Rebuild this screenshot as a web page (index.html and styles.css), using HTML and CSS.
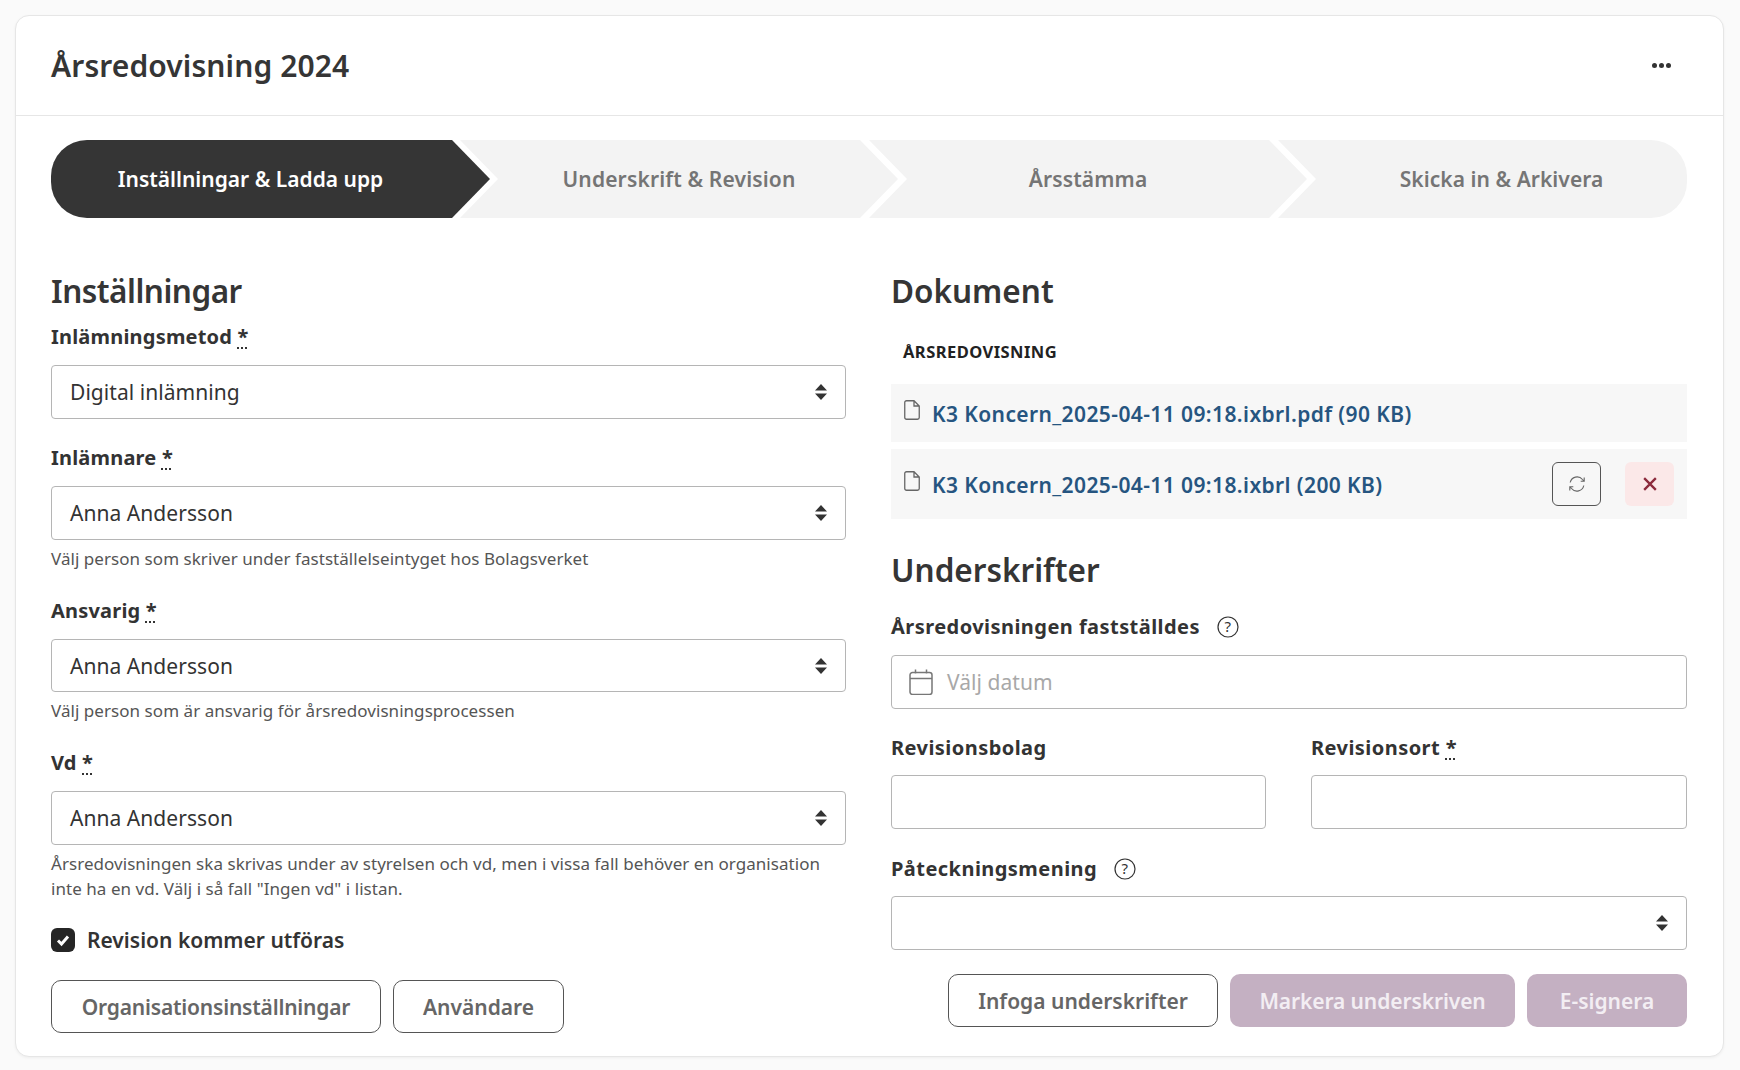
FILE: index.html
```html
<!DOCTYPE html>
<html lang="sv">
<head>
<meta charset="utf-8">
<title>Årsredovisning 2024</title>
<link rel="stylesheet" href="styles.css">
</head>
<body>
<main class="card">
  <header class="card-head">
    <h1 class="title">Årsredovisning 2024</h1>
    <button class="more" aria-label="Mer"><span></span><span></span><span></span></button>
  </header>
  <div class="card-body">
    <nav class="steps">
      <div class="step step-first">Inställningar &amp; Ladda upp</div>
      <div class="step step-mid">Underskrift &amp; Revision</div>
      <div class="step step-mid">Årsstämma</div>
      <div class="step step-last">Skicka in &amp; Arkivera</div>
    </nav>
    <div class="columns">
      <section class="col col-left">
        <h2 class="heading heading-left">Inställningar</h2>
        <label class="label label-first">Inlämningsmetod <abbr class="req">*</abbr></label>
        <div class="control select">Digital inlämning<svg class="updown" viewBox="0 0 12 16"><path d="M6 0l6 6.5H0zM6 16l6-6.5H0z"/></svg></div>
        <label class="label label-next">Inlämnare <abbr class="req">*</abbr></label>
        <div class="control select">Anna Andersson<svg class="updown" viewBox="0 0 12 16"><path d="M6 0l6 6.5H0zM6 16l6-6.5H0z"/></svg></div>
        <p class="help">Välj person som skriver under fastställelseintyget hos Bolagsverket</p>
        <label class="label label-help">Ansvarig <abbr class="req">*</abbr></label>
        <div class="control select control-short">Anna Andersson<svg class="updown" viewBox="0 0 12 16"><path d="M6 0l6 6.5H0zM6 16l6-6.5H0z"/></svg></div>
        <p class="help">Välj person som är ansvarig för årsredovisningsprocessen</p>
        <label class="label label-vd">Vd <abbr class="req">*</abbr></label>
        <div class="control select">Anna Andersson<svg class="updown" viewBox="0 0 12 16"><path d="M6 0l6 6.5H0zM6 16l6-6.5H0z"/></svg></div>
        <p class="help">Årsredovisningen ska skrivas under av styrelsen och vd, men i vissa fall behöver en organisation inte ha en vd. Välj i så fall "Ingen vd" i listan.</p>
        <div class="check-row">
          <span class="checkbox"><svg viewBox="0 0 24 24"><path d="M7 12.5l3.5 3.5L17 8.500" fill="none" stroke="#fff" stroke-width="3"/></svg></span>
          <span class="check-label">Revision kommer utföras</span>
        </div>
        <div class="actions actions-left">
          <button class="btn btn-outline btn-org">Organisationsinställningar</button>
          <button class="btn btn-outline btn-users">Användare</button>
        </div>
      </section>
      <section class="col col-right">
        <h2 class="heading heading-right">Dokument</h2>
        <div class="doc-group">ÅRSREDOVISNING</div>
        <div class="doc-row doc-row-a">
          <svg class="file" viewBox="0 0 16 20"><path d="M2.500.75h7.500l5.250 5.250v11.500a1.750 1.750 0 0 1-1.750 1.750h-11a1.750 1.750 0 0 1-1.750-1.750v-15a1.750 1.750 0 0 1 1.750-1.750zM10 .75v5.250h5.250" fill="none" stroke="#666" stroke-width="1.300"/></svg>
          <a class="doc-link">K3 Koncern_2025-04-11 09:18.ixbrl.pdf (90 KB)</a>
        </div>
        <div class="doc-row doc-row-b">
          <svg class="file" viewBox="0 0 16 20"><path d="M2.500.75h7.500l5.250 5.250v11.500a1.750 1.750 0 0 1-1.750 1.750h-11a1.750 1.750 0 0 1-1.750-1.750v-15a1.750 1.750 0 0 1 1.750-1.750zM10 .75v5.250h5.250" fill="none" stroke="#666" stroke-width="1.300"/></svg>
          <a class="doc-link">K3 Koncern_2025-04-11 09:18.ixbrl (200 KB)</a>
          <button class="icon-btn icon-refresh" aria-label="Uppdatera"><svg viewBox="0 0 18 18" width="18" height="18"><path d="M2.200 7.500A7 7 0 0 1 14.500 4.500L16 6.200M15.800 10.500A7 7 0 0 1 3.500 13.500L2 11.800M16.200 2.500V6.200H12.700M1.800 15.500V11.800H5.300" fill="none" stroke="#666" stroke-width="1.100"/></svg></button>
          <button class="icon-btn icon-delete" aria-label="Ta bort"><svg viewBox="0 0 12 12" width="14" height="14"><path d="M1 1l10 10M11 1L1 11" fill="none" stroke="#8c2a3c" stroke-width="2"/></svg></button>
        </div>
        <h2 class="heading heading-sign">Underskrifter</h2>
        <label class="label label-date">Årsredovisningen fastställdes <svg class="q" viewBox="0 0 22 22"><circle cx="11" cy="11" r="10" fill="none" stroke="#333" stroke-width="1.200"/><text x="11" y="16" text-anchor="middle" class="q-mark">?</text></svg></label>
        <div class="control date">
          <svg class="cal" viewBox="0 0 24 26"><path d="M3.500 3.500h17a2.500 2.500 0 0 1 2.500 2.500v17a2.500 2.500 0 0 1-2.500 2.500h-17a2.500 2.500 0 0 1-2.500-2.500v-17a2.500 2.500 0 0 1 2.500-2.500zM1 9.500h22M6.500 .5v4M17.500 .5v4" fill="none" stroke="#777" stroke-width="1.500"/></svg>
          <span class="placeholder">Välj datum</span>
        </div>
        <div class="pair">
          <div class="pair-item">
            <label class="label">Revisionsbolag</label>
            <div class="control"></div>
          </div>
          <div class="pair-item">
            <label class="label">Revisionsort <abbr class="req">*</abbr></label>
            <div class="control"></div>
          </div>
        </div>
        <label class="label label-pat">Påteckningsmening <svg class="q" viewBox="0 0 22 22"><circle cx="11" cy="11" r="10" fill="none" stroke="#333" stroke-width="1.200"/><text x="11" y="16" text-anchor="middle" class="q-mark">?</text></svg></label>
        <div class="control select"><span></span><svg class="updown" viewBox="0 0 12 16"><path d="M6 0l6 6.5H0zM6 16l6-6.5H0z"/></svg></div>
        <div class="actions actions-right">
          <button class="btn btn-outline btn-insert">Infoga underskrifter</button>
          <button class="btn btn-muted btn-mark">Markera underskriven</button>
          <button class="btn btn-muted btn-sign">E-signera</button>
        </div>
      </section>
    </div>
  </div>
</main>
</body>
</html>
```
FILE: styles.css
```css
* { box-sizing: border-box; }
html, body { margin: 0; height: 100%; }
body {
  background: #fafafa;
  color: #333;
  font-family: "Noto Sans", "Liberation Sans", sans-serif;
  padding: 15px 16px 13px 15px;
}
.card {
  height: 1042px;
  background: #fff;
  border: 1px solid #e6e6e6;
  border-radius: 14px;
  box-shadow: 0 1px 3px rgba(0, 0, 0, .05);
}
.card-head {
  height: 100px;
  padding: 0 35px;
  display: flex;
  align-items: center;
  justify-content: space-between;
  border-bottom: 1px solid #e6e6e6;
}
.title { margin: 0; font-size: 30px; font-weight: 600; letter-spacing: .1px; color: #353535; }
.more {
  display: flex;
  gap: 2px;
  padding: 0;
  margin-right: 17px;
  border: 0;
  background: none;
}
.more span { width: 5px; height: 5px; border-radius: 50%; background: #333; }
.card-body { padding: 24px 35px 0; }
.steps { display: flex; height: 78px; }
.step {
  height: 78px;
  display: flex;
  align-items: center;
  justify-content: center;
  font-size: 21px;
  font-weight: 600;
  background: #f3f3f3;
  color: #757575;
}
.step-first {
  width: 439px;
  margin-right: -30px;
  padding-right: 40px;
  color: #fff;
  background: #353535;
  border-radius: 36px 0 0 36px;
  clip-path: polygon(0 0, 401px 0, 439px 50%, 401px 100%, 0 100%);
}
.step-mid {
  width: 438px;
  margin-right: -29px;
  letter-spacing: .15px;
  clip-path: polygon(0 0, 400px 0, 438px 50%, 400px 100%, 0 100%, 38px 50%);
}
.step-last {
  width: 409px;
  padding-left: 38px;
  letter-spacing: .05px;
  border-radius: 0 36px 36px 0;
  clip-path: polygon(0 0, 100% 0, 100% 100%, 0 100%, 38px 50%);
}
.columns {
  display: grid;
  grid-template-columns: 795px 796px;
  column-gap: 45px;
  margin-top: 49px;
}
.heading { margin: 0; font-size: 31.500px; line-height: 48px; font-weight: 600; color: #353535; }
.heading-left { letter-spacing: -.5px; }
.label {
  display: block;
  font-size: 20px;
  line-height: 28px;
  font-weight: 700;
  letter-spacing: .2px;
  color: #333;
}
.col-right .label { letter-spacing: .45px; }
.label-first { margin-top: 8px; margin-bottom: 14px; }
.label-next { margin-top: 25px; margin-bottom: 14px; }
.label-help { margin-top: 26px; margin-bottom: 14px; }
.label-vd { margin-top: 26px; margin-bottom: 14px; }
.req {
  text-decoration: underline dotted;
  text-underline-offset: 3px;
  font-weight: 700;
}
.control {
  height: 54px;
  border: 1px solid #b5b5b5;
  border-radius: 4px;
  background: #fff;
  padding: 0 18px;
  display: flex;
  align-items: center;
  font-size: 21px;
  letter-spacing: .05px;
  color: #333;
}
.control-short { height: 53px; }
.select { justify-content: space-between; }
.updown { width: 12px; height: 16px; fill: #333; margin-right: 0; }
.help {
  margin: 6px 0 0;
  font-size: 17px;
  line-height: 25px;
  letter-spacing: .05px;
  color: #555;
}
.check-row { display: flex; align-items: center; gap: 12px; margin-top: 25px; }
.checkbox {
  width: 24px;
  height: 24px;
  border-radius: 6px;
  background: #262626;
  display: block;
}
.checkbox svg { display: block; width: 24px; height: 24px; }
.check-label { font-size: 21px; font-weight: 600; color: #333; }
.actions { display: flex; gap: 12px; }
.actions-left { margin-top: 26px; }
.actions-right { justify-content: flex-end; margin-top: 24px; }
.btn {
  height: 53px;
  border-radius: 10px;
  font: 600 21px "Noto Sans", "Liberation Sans", sans-serif;
  padding: 0;
}
.btn-outline { background: #fff; border: 1px solid #555; color: #666; }
.btn-muted { background: #c4b0c2; border: 0; color: #f3eef3; }
.btn-org { width: 330px; letter-spacing: -.2px; }
.btn-users { width: 171px; }
.btn-insert { width: 270px; }
.btn-mark { width: 285px; letter-spacing: -.1px; }
.btn-sign { width: 160px; }
.doc-group {
  font-size: 16.500px;
  font-weight: 700;
  line-height: 24px;
  letter-spacing: .45px;
  color: #222;
  padding-left: 12px;
  margin-top: 25px;
  margin-bottom: 20px;
}
.doc-row {
  display: flex;
  align-items: center;
  background: #f7f7f7;
  padding-left: 13px;
  padding-right: 13px;
}
.doc-row-a { height: 58px; }
.doc-row-b { height: 70px; margin-top: 7px; }
.file { width: 16px; height: 20px; margin-right: 12px; margin-top: -6px; flex: none; }
.doc-link { padding-top: 2px; font-size: 21px; font-weight: 600; letter-spacing: .4px; color: #265580; }
.icon-btn {
  width: 49px;
  height: 44px;
  border-radius: 6px;
  display: flex;
  align-items: center;
  justify-content: center;
  padding: 0;
}
.icon-refresh { margin-left: auto; margin-right: 24px; border: 1px solid #555; background: transparent; }
.icon-delete { border: 0; background: #fbe8e8; }
.heading-sign { margin-top: 27px; }
.label-date { margin-top: 19px; margin-bottom: 14px; display: flex; align-items: center; gap: 17px; }
.label-pat { margin-top: 26px; margin-bottom: 13px; display: flex; align-items: center; gap: 17px; }
.q { width: 22px; height: 22px; }
.q-mark { font-size: 15px; font-weight: 400; fill: #333; }
.date { gap: 14px; padding-left: 17px; }
.cal { width: 24px; height: 26px; flex: none; }
.placeholder { color: #a8a8a8; }
.pair { display: grid; grid-template-columns: 375px 376px; column-gap: 45px; margin-top: 25px; }
.pair-item .label { margin-bottom: 13px; }
```
